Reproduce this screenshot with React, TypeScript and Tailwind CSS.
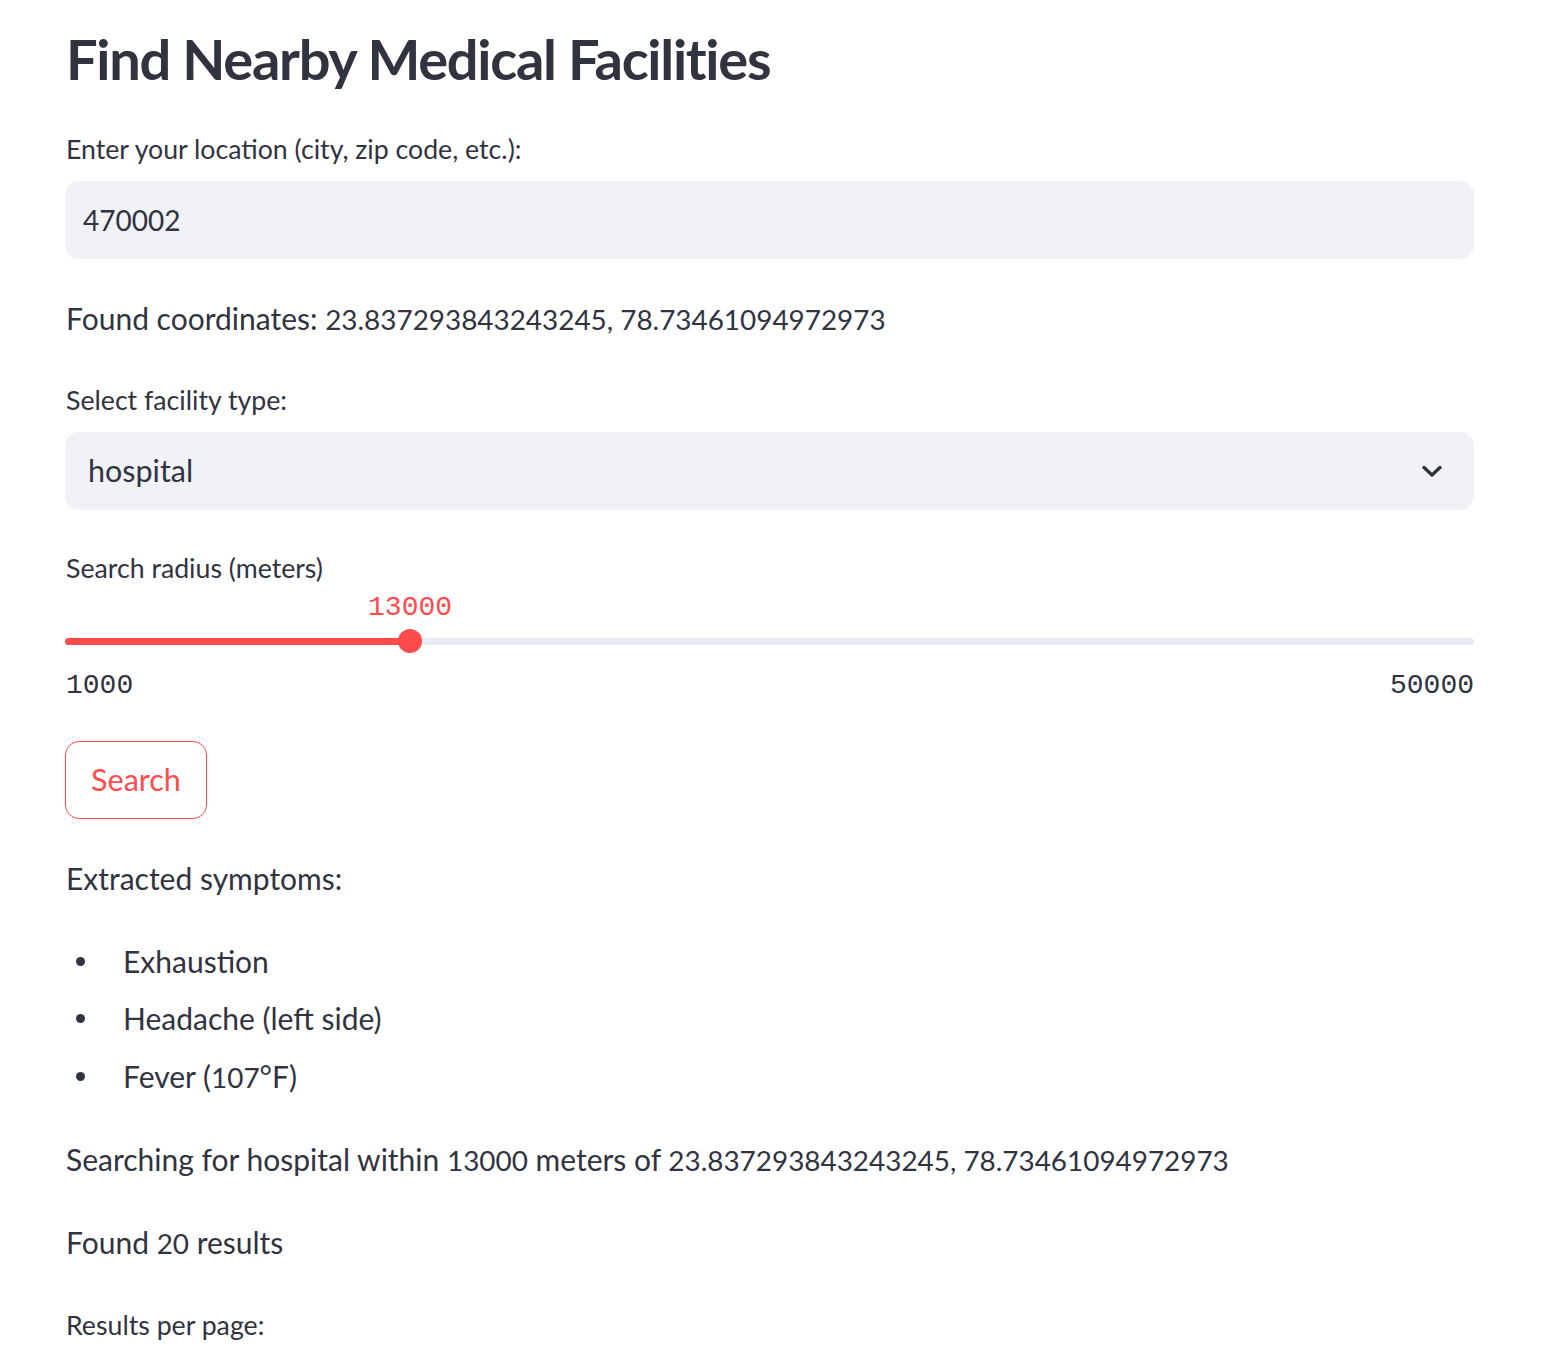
import React from "react";

const symptoms = ["Exhaustion", "Headache (left side)", "Fever (107°F)"];

const Label: React.FC<{ children: React.ReactNode; className?: string }> = ({
  children,
  className = "",
}) => (
  <div className={`h-[36px] text-[26.7px] leading-[36px] ${className}`}>
    {children}
  </div>
);

const Line: React.FC<{ children: React.ReactNode; className?: string }> = ({
  children,
  className = "",
}) => (
  <p className={`h-[42px] text-[30px] leading-[42px] whitespace-nowrap ${className}`}>
    {children}
  </p>
);

// digits in Lato run wider than the original face, so numbers get a touch smaller
const Num: React.FC<{ children: React.ReactNode }> = ({ children }) => (
  <span className="text-[27.9px]">{children}</span>
);

export default function App() {
  const min = 1000;
  const max = 50000;
  const value = 13000;
  const pct = ((value - min) / (max - min)) * 100;

  return (
    <div
      className="min-h-[1350px] bg-white text-[#31333f]"
      style={{ fontFamily: "Lato, 'Noto Sans', sans-serif" }}
    >
      <div className="ml-[65px] w-[1409px] flex flex-col">
        <h1 className="mt-[22px] h-[74px] text-[56px] leading-[74px] font-bold tracking-[-1.3px] pl-px">
          Find Nearby Medical Facilities
        </h1>

        <Label className="mt-[35px] pl-px">Enter your location (city, zip code, etc.):</Label>
        <div className="mt-[14px] h-[78px] rounded-[14px] bg-[#f0f2f6] flex items-center px-[18px] text-[28px]">
          470002
        </div>

        <Line className="mt-[38px] pl-px">
          Found coordinates: <Num>23.837293843243245, 78.73461094972973</Num>
        </Line>

        <Label className="mt-[43px] pl-px">Select facility type:</Label>
        <div className="mt-[14px] h-[78px] rounded-[14px] bg-[#f0f2f6] flex items-center justify-between pl-[23px] pr-[31px] text-[30.5px]">
          <span>hospital</span>
          <svg width="22" height="14" viewBox="0 0 22 14" fill="none">
            <path
              d="M3 3.5 L11 11 L19 3.5"
              stroke="#31333f"
              strokeWidth="3.4"
              strokeLinecap="round"
              strokeLinejoin="round"
            />
          </svg>
        </div>

        <Label className="mt-[40px] pl-px">Search radius (meters)</Label>

        <div className="relative mt-[8px] h-[28px]">
          <span
            className="absolute top-0 -translate-x-1/2 text-[28px] leading-[28px] text-[#ff4b4b]"
            style={{ left: `${pct}%`, fontFamily: "'Liberation Mono', monospace" }}
          >
            {value}
          </span>
        </div>
        <div className="relative mt-[7px] h-[24px] flex items-center">
          <div className="w-full h-[7px] rounded-full bg-[#e6eaf1]" />
          <div
            className="absolute left-0 h-[7px] rounded-full bg-[#ff4b4b]"
            style={{ width: `${pct}%` }}
          />
          <div
            className="absolute top-0 w-[24px] h-[24px] -translate-x-1/2 rounded-full bg-[#ff4b4b]"
            style={{ left: `${pct}%` }}
          />
        </div>
        <div
          className="mt-[19px] h-[28px] flex justify-between text-[28px] leading-[28px] pl-px"
          style={{ fontFamily: "'Liberation Mono', monospace" }}
        >
          <span>1000</span>
          <span>50000</span>
        </div>

        <div className="mt-[41px]">
          <button className="h-[78px] w-[142px] rounded-[14px] border-[1.75px] border-[#ff4b4b] text-[30.5px] text-[#ff4b4b] bg-white">
            Search
          </button>
        </div>

        <Line className="mt-[38px] pl-px">Extracted symptoms:</Line>

        <ul className="mt-[41px] flex flex-col gap-[15.5px]">
          {symptoms.map((s) => (
            <li key={s} className="h-[42px] flex items-center text-[30px]">
              <span className="ml-[11px] w-[9px] h-[9px] rounded-full bg-[#31333f]" />
              <span className="ml-[38px]">
                {s === "Fever (107°F)" ? (
                  <>
                    Fever (<Num>107</Num>°F)
                  </>
                ) : (
                  s
                )}
              </span>
            </li>
          ))}
        </ul>

        <Line className="mt-[41px] pl-px">
          Searching for hospital within <Num>13000</Num> meters of{" "}
          <Num>23.837293843243245, 78.73461094972973</Num>
        </Line>

        <Line className="mt-[41px] pl-px">
          Found <Num>20</Num> results
        </Line>

        <Label className="mt-[44px] pl-px">Results per page:</Label>
      </div>
    </div>
  );
}
